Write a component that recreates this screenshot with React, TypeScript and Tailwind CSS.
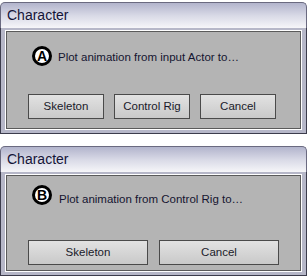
import React from "react";

const font = { fontFamily: '"Liberation Sans", Arial, sans-serif' };

function Badge({ letter }: { letter: string }) {
  return (
    <span className="flex h-[20px] w-[20px] shrink-0 items-center justify-center rounded-full border-[3px] border-black bg-white text-[14px] font-bold leading-none text-black">
      {letter}
    </span>
  );
}

function Button({ label, wide }: { label: string; wide?: boolean }) {
  return (
    <button
      className={`h-[25px] ${wide ? "w-[120px]" : "w-[76px]"} border border-[#4a4a4a] bg-gradient-to-b from-[#e2e2e2] to-[#c9c9c9] text-[11.5px] text-[#1a1a2a]`}
    >
      {label}
    </button>
  );
}

function Dialog({
  letter,
  text,
  buttons,
  wide,
}: {
  letter: string;
  text: string;
  buttons: string[];
  wide?: boolean;
}) {
  return (
    <div className="w-[307px]">
      {/* Title bar */}
      <div className="flex h-[26px] items-center rounded-t-[5px] border border-b-0 border-[#6a6a80] bg-gradient-to-b from-[#b2b4cc] via-[#d8d9e6] to-[#f6f6f9] px-[6px]">
        <span className="text-[14px] text-[#141438]">Character</span>
      </div>
      {/* Frame */}
      <div className="border border-t-0 border-[#3c3c4c] bg-[#b6b7c8] px-[4px] pb-[3px] pt-[2px]">
        <div className="border border-white">
          {wide ? (
            <div className="border border-[#5a5a5a] bg-[#b4b4b4] px-[21px] pb-[5px] pt-[9px]">
              <div className="flex items-end gap-[7px] pl-[4px]">
                <Badge letter={letter} />
                <span className="text-[11.5px] leading-none text-[#141430]">{text}</span>
              </div>
              <div className="mt-[35px] flex gap-[11px]">
                {buttons.map((b) => (
                  <Button key={b} label={b} wide />
                ))}
              </div>
            </div>
          ) : (
            <div className="border border-[#5a5a5a] bg-[#b4b4b4] px-[21px] pb-[9px] pt-[14px]">
              <div className="flex items-center gap-[6px] pl-[4px]">
                <Badge letter={letter} />
                <span className="pt-[3px] text-[11.5px] text-[#141430]">{text}</span>
              </div>
              <div className="mt-[28px] flex gap-[10px]">
                {buttons.map((b) => (
                  <Button key={b} label={b} />
                ))}
              </div>
            </div>
          )}
        </div>
      </div>
    </div>
  );
}

export default function App() {
  return (
    <div className="flex h-[280px] w-[308px] flex-col gap-[12px] bg-white pt-[2px]" style={font}>
      <Dialog
        letter="A"
        text="Plot animation from input Actor to…"
        buttons={["Skeleton", "Control Rig", "Cancel"]}
      />
      <Dialog
        letter="B"
        text="Plot animation from Control Rig to…"
        buttons={["Skeleton", "Cancel"]}
        wide
      />
    </div>
  );
}
